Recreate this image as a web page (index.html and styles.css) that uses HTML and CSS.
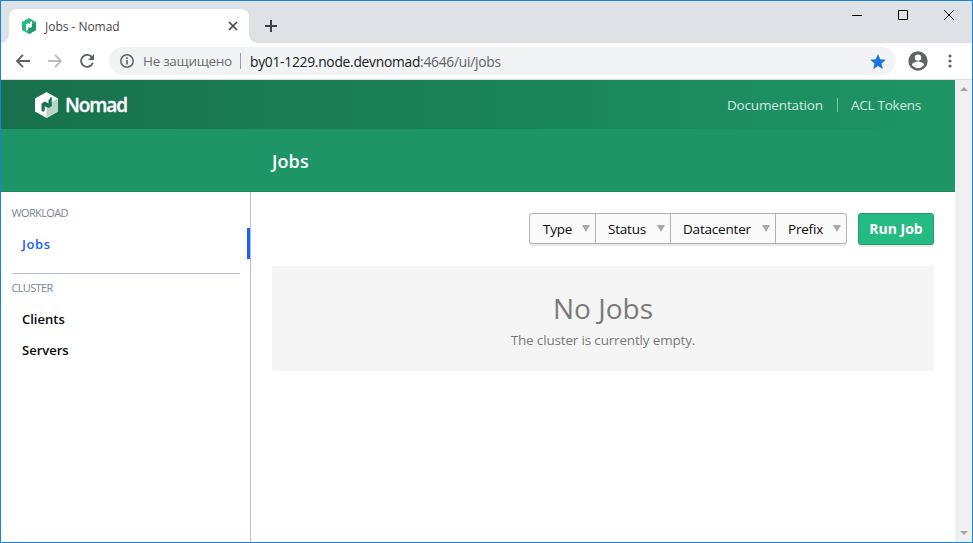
FILE: index.html
```
<!DOCTYPE html>
<html lang="en">
<head>
<meta charset="utf-8">
<title>Jobs - Nomad</title>
<link rel="stylesheet" href="styles.css">
</head>
<body>
<div class="window">
  <div class="tabstrip">
    <div class="tab">
      <svg class="favicon" width="14" height="16" viewBox="0 0 14 16"><path fill="#25ba81" d="M7 0l7 4v8l-7 4-7-4V4z"/><path fill="#1f9967" d="M7 8l7-4v8l-7 4z"/><path fill="#fff" d="M4 6.400l2-1.200 2 1V4l2-.8v5.600l-2 1.200-2-1V12l-2 .8z"/></svg>
      <span class="tab-title">Jobs - Nomad</span>
      <svg class="tab-close" width="10" height="10" viewBox="0 0 10 10"><path d="M1 1l8 8M9 1L1 9" stroke="#45484c" stroke-width="1.700"/></svg>
    </div>
    <svg class="new-tab" width="12" height="12" viewBox="0 0 12 12"><path d="M6 0v12M0 6h12" stroke="#3c4043" stroke-width="2"/></svg>
    <div class="controls">
      <svg width="10" height="10" viewBox="0 0 10 10"><path d="M0 5.500h10" stroke="#000"/></svg>
      <svg width="10" height="10" viewBox="0 0 10 10"><path d="M.5.5h9v9h-9z" fill="none" stroke="#000"/></svg>
      <svg width="10" height="10" viewBox="0 0 10 10"><path d="M0 0l10 10M10 0L0 10" stroke="#000"/></svg>
    </div>
  </div>
  <div class="toolbar">
    <svg class="nav" width="14" height="14" viewBox="0 0 14 14"><path d="M14 7H1.500M7 .8L1 7l6 6.200" fill="none" stroke="#5f6368" stroke-width="1.900"/></svg>
    <svg class="nav" width="14" height="14" viewBox="0 0 14 14"><path d="M0 7h12.500M7 .8L13 7l-6 6.200" fill="none" stroke="#babcbe" stroke-width="1.900"/></svg>
    <svg class="nav" width="14" height="14" viewBox="0 0 14 14"><path d="M12 3.400A6 6 0 1 0 12.800 8.800" fill="none" stroke="#5f6368" stroke-width="1.900"/><path d="M14 0v6H8z" fill="#5f6368"/></svg>
    <div class="omnibox">
      <svg width="14" height="14" viewBox="0 0 14 14"><circle cx="7" cy="7" r="6.200" fill="none" stroke="#5f6368" stroke-width="1.500"/><path d="M7 6v4.500M7 3.300v1.600" stroke="#5f6368" stroke-width="1.600"/></svg>
      <span class="security">Не защищено</span>
      <span class="omni-sep"></span>
      <span class="url">by01-1229.node.devnomad<span class="path">:4646/ui/jobs</span></span>
      <svg class="star" width="16" height="15" viewBox="0 0 16 15"><path fill="#1a73e8" d="M8 0l2.200 5.200 5.600.5-4.300 3.700 1.300 5.500L8 12l-4.800 2.900 1.300-5.500L.2 5.700l5.600-.5z"/></svg>
    </div>
    <svg class="avatar" width="20" height="20" viewBox="0 0 20 20"><circle cx="10" cy="10" r="9.700" fill="#5f6368"/><circle cx="10" cy="6.600" r="3.200" fill="#fff"/><path fill="#fff" d="M4 14c0-2.200 4-3.400 6-3.400s6 1.200 6 3.400c-1.300 2-3.500 3.200-6 3.200S5.300 16 4 14z"/></svg>
    <svg class="dots" width="4" height="14" viewBox="0 0 4 14"><g fill="#5f6368"><circle cx="2" cy="2" r="1.600"/><circle cx="2" cy="7" r="1.600"/><circle cx="2" cy="12" r="1.600"/></g></svg>
  </div>
  <div class="viewport">
    <div class="page">
      <header class="navbar">
        <svg class="logo" width="23" height="26" viewBox="0 0 23 26"><path fill="#fff" d="M11.500 0L23 6.500v13L11.500 26 0 19.500v-13z"/><path fill="#b9d5ca" d="M11.500 13L23 6.500v13L11.500 26z"/><path fill="#197550" d="M6.500 11.500l3.300-2 3.700 2V8l1.200-.7V6l2.100-1v9.300L13.500 16l-3.700-1.700v4.200l-1 .6V20l-2.300-1.200z"/></svg>
        <span class="wordmark">Nomad</span>
        <nav class="links"><a class="docs">Documentation</a><a class="acl">ACL Tokens</a></nav>
      </header>
      <div class="subnav"><h1>Jobs</h1></div>
      <div class="columns">
        <aside class="sidebar">
          <p class="label workload">WORKLOAD</p>
          <a class="item active">Jobs</a>
          <hr>
          <p class="label cluster">CLUSTER</p>
          <a class="item">Clients</a>
          <a class="item">Servers</a>
        </aside>
        <main class="main">
          <div class="actions">
            <div class="facets">
              <div class="facet type"><span>Type</span><i></i></div>
              <div class="facet status"><span>Status</span><i></i></div>
              <div class="facet dc"><span>Datacenter</span><i></i></div>
              <div class="facet prefix"><span>Prefix</span><i></i></div>
            </div>
            <button class="run">Run Job</button>
          </div>
          <section class="empty"><h2>No Jobs</h2><p>The cluster is currently empty.</p></section>
        </main>
      </div>
    </div>
    <div class="scrollbar"><i class="up"></i><i class="down"></i></div>
  </div>
</div>
</body>
</html>
```
FILE: styles.css
```
* { box-sizing: border-box; }
body, h1, h2, p { margin: 0; }
body { font-family: "Open Sans", "Noto Sans", sans-serif; font-size: 14px; overflow: hidden; }
svg { display: block; flex: none; }
span, a, h1, h2, p { white-space: nowrap; }
.window { width: 973px; height: 543px; border: 1px solid #1883d7; background: #fff; display: flex; flex-direction: column; }

.tabstrip { height: 42px; background: #dee1e6; display: flex; padding-left: 8px; }
.tab { position: relative; width: 240px; height: 34px; margin-top: 8px; background: #fff; border-radius: 8px 8px 0 0; display: flex; align-items: center; padding: 0 11px 0 13px; }
.tab::before, .tab::after { content: ""; position: absolute; bottom: 0; width: 8px; height: 8px; }
.tab::before { left: -8px; background: radial-gradient(circle at 0 0, #dee1e6 7.5px, #fff 8px); }
.tab::after { right: -8px; background: radial-gradient(circle at 100% 0, #dee1e6 7.5px, #fff 8px); }
.tab-title { margin-left: 9px; font-size: 12px; color: #45484c; letter-spacing: -.03px; }
.tab-close { margin-left: auto; }
.new-tab { margin: 19px 0 0 16px; }
.controls { margin-left: auto; display: flex; gap: 36px; padding: 9px 18px 0 0; }

.toolbar { height: 37px; border-bottom: 1px solid #dadce0; display: flex; align-items: center; padding-left: 15px; }
.nav { margin-right: 18px; }
.omnibox { width: 787px; height: 28px; border-radius: 14px; background: #f1f3f4; display: flex; align-items: center; padding: 0 10px 0 11px; margin-left: -3px; }
.security { margin-left: 9px; color: #6b6e72; width: 89px; font-size: 13.5px; letter-spacing: -.3px; }
.omni-sep { width: 1px; height: 16px; background: #9aa0a6; margin: 0 9px 0 8px; }
.url { color: #202124; font-size: 13.8px; letter-spacing: -.26px; }
.path { color: #5f6368; }
.star { margin-left: auto; }
.avatar { margin-left: 12px; }
.dots { margin-left: 20px; }

.viewport { flex: 1; min-height: 0; display: flex; }
.page { width: 954px; display: flex; flex-direction: column; }
.navbar { height: 49px; background: linear-gradient(to right, #18704c, #1e9567); display: flex; align-items: center; padding: 0 34px; }
.wordmark { color: #fff; font-size: 19px; font-weight: 600; margin-left: 7px; letter-spacing: -1.1px; -webkit-text-stroke: .3px #fff; }
.links { margin-left: auto; display: flex; align-items: center; color: #d2ebe1; font-size: 13.5px; }
.links a { line-height: 14px; letter-spacing: -.15px; }
.docs { border-right: 1px solid #7cc3a4; padding-right: 14px; }
.acl { padding-left: 13px; }
.links .acl { letter-spacing: -.25px; }
.subnav { height: 63px; background: #1e9567; padding: 20px 0 0 271px; border-bottom: 1px solid #1b8c5e; }
.subnav h1 { color: #fff; font-size: 18px; line-height: 24px; font-weight: 600; letter-spacing: .1px; }

.columns { flex: 1; display: flex; }
.sidebar { width: 250px; border-right: 1px solid #bac1cc; padding-top: 13px; }
.label { margin-left: 10.5px; font-size: 11px; line-height: 16px; color: #7a8499; letter-spacing: -.65px; }
.item { height: 31px; line-height: 30px; display: block; padding-left: 21px; font-weight: 600; font-size: 13px; color: #0a0a0a; }
.workload { margin-bottom: 7px; }
.item.active { color: #1563ff; border-right: 3px solid #1563ff; line-height: 32px; letter-spacing: .6px; }
.sidebar hr { border: 0; height: 1px; background: #bac1cc; margin: 14px 10px 6px 11px; }
.cluster { margin-bottom: 8px; }
.main { flex: 1; padding: 21px 21px 0; }
.actions { display: flex; justify-content: flex-end; height: 53px; }
.facets { display: flex; height: 31px; border: 1px solid #b3b3b3; border-radius: 3px; background: #fafafa; box-shadow: 0 2px 0 #e8e8e8; margin-right: 11px; }
.facet { display: flex; align-items: center; justify-content: space-between; padding: 1px 5px 0 12px; color: #0a0a0a; }
.facet + .facet { border-left: 1px solid #b3b3b3; }
.facet i { border: 4px solid transparent; border-top: 7px solid #a9a9a9; border-bottom: 0; margin-top: -2px; }
.type { width: 65px; padding-left: 13px; }
.status { width: 75px; }
.dc { width: 105px; }
.prefix { width: 71px; }
.facet span { font-size: 13.5px; letter-spacing: -.2px; }
.dc span { letter-spacing: -.2px; }
.run { width: 76px; height: 32px; border: 1px solid #1f9967; border-radius: 3px; background: #25ba81; color: #fff; font: 700 14px "Open Sans", sans-serif; padding: 0 0 1px; box-shadow: 0 2px 0 #e8e8e8; letter-spacing: 0; }
.empty { height: 105px; border-radius: 2px; background: #f5f5f5; color: #7a7a7a; text-align: center; padding-top: 24px; }
.empty h2 { font-size: 28px; line-height: 36px; font-weight: 400; }
.empty p { line-height: 20px; margin-top: 4px; font-size: 13.5px; letter-spacing: -.17px; }
.scrollbar { width: 17px; background: #f0f0f0; display: flex; flex-direction: column; justify-content: space-between; align-items: center; padding: 7px 0; }
.up { border: 4px solid transparent; border-top: 0; border-bottom-color: #a3a3a3; }
.down { border: 4px solid transparent; border-bottom: 0; border-top-color: #a3a3a3; }
```
